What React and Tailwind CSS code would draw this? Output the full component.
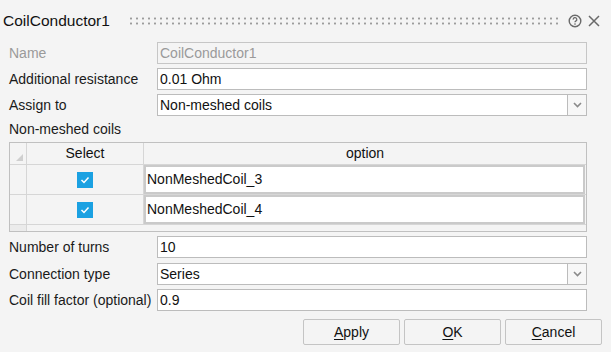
import React from "react";

const font = { fontFamily: "'Liberation Sans', Arial, sans-serif" };

const Field = ({ label, value, disabled, select, mt = "mt-[4px]" }) => (
  <div className={`flex items-center h-[22px] ${mt}`}>
    <div className={`w-[148px] whitespace-nowrap ${disabled ? "text-[#9a9a9a]" : "text-[#1a1a1a]"}`}>{label}</div>
    <div className="flex flex-1 h-full">
      <div
        className={`flex-1 flex items-center px-[2px] border ${
          disabled ? "border-[#c6c6c6] bg-[#f4f4f4] text-[#9a9a9a]" : "border-[#bcbcbc] bg-white text-[#111]"
        }`}
      >
        {value}
      </div>
      {select && (
        <div className="w-[19px] border border-l-0 border-[#bcbcbc] bg-[#f7f7f7] flex items-center justify-center">
          <svg width="9" height="6" viewBox="0 0 9 6">
            <path d="M1 1l3.5 3.5L8 1" fill="none" stroke="#8a8a8a" strokeWidth="1.6" />
          </svg>
        </div>
      )}
    </div>
  </div>
);

const Check = () => (
  <div className="w-[16px] h-[16px] bg-[#1ba1e2] flex items-center justify-center">
    <svg width="10" height="8" viewBox="0 0 10 8">
      <path d="M1.5 4l2.5 2.5L8.5 1.5" fill="none" stroke="white" strokeWidth="1.5" />
    </svg>
  </div>
);

const Row = ({ name }) => (
  <div className="flex h-[30px] border-b border-[#d6d6d6]">
    <div className="w-[17px] border-r border-[#d6d6d6]" />
    <div className="w-[117px] border-r border-[#d6d6d6] flex items-center justify-center">
      <Check />
    </div>
    <div className="flex-1 bg-white border-2 border-[#cacaca] flex items-center px-[1px] mr-[1px] text-[#111]">
      {name}
    </div>
  </div>
);

const Btn = ({ first, rest }) => (
  <button className="w-[97px] h-[26px] border border-[#c4c4c4] rounded-[2px] bg-[#f4f4f4] text-[#111]">
    <span className="underline underline-offset-2">{first}</span>
    {rest}
  </button>
);

export default function App() {
  return (
    <div className="w-[611px] h-[352px] bg-[#f4f4f4] text-[14px] overflow-hidden" style={font}>
      <div className="flex items-center h-[42px] pl-[3px] pb-[1px]">
        <div className="text-[15.5px] text-[#111]">CoilConductor1</div>
        <div className="ml-[18px] w-[432px] h-[9px] bg-[radial-gradient(circle,#9c9c9c_1px,transparent_1.2px)] bg-[length:6px_5px]" />
        <svg className="ml-[8px]" width="14" height="14" viewBox="0 0 14 14">
          <circle cx="7" cy="7" r="5.8" fill="none" stroke="#6a6a6a" strokeWidth="1.4" />
          <path d="M5.2 5.6a1.8 1.8 0 1 1 2.6 1.5c-.6.3-.8.6-.8 1.2" fill="none" stroke="#6a6a6a" strokeWidth="1.3" />
          <circle cx="7" cy="10.1" r="0.8" fill="#6a6a6a" />
        </svg>
        <svg className="ml-[6px]" width="12" height="12" viewBox="0 0 12 12">
          <path d="M1 1l10 10M11 1L1 11" stroke="#6a6a6a" strokeWidth="1.5" />
        </svg>
      </div>

      <div className="pl-[9px] pr-[24px]">
        <Field label="Name" value="CoilConductor1" disabled mt="mt-0" />
        <Field label="Additional resistance" value="0.01 Ohm" />
        <Field label="Assign to" value="Non-meshed coils" select />
        <div className="h-[26px] flex items-center text-[#1a1a1a]">Non-meshed coils</div>

        <div className="h-[90px] border border-[#c0c0c0] flex flex-col">
          <div className="flex h-[22px] border-b border-[#d6d6d6] text-[#111]">
            <div className="w-[17px] border-r border-[#d6d6d6] relative">
              <div className="absolute right-[3px] bottom-[3px] w-0 h-0 border-l-[7px] border-l-transparent border-b-[7px] border-b-[#cfcfcf]" />
            </div>
            <div className="w-[117px] border-r border-[#d6d6d6] flex items-center justify-center">Select</div>
            <div className="flex-1 flex items-center justify-center">option</div>
          </div>
          <Row name="NonMeshedCoil_3" />
          <Row name="NonMeshedCoil_4" />
          <div className="flex-1 flex">
            <div className="w-[17px] border-r border-[#d6d6d6] bg-[#ebebeb]" />
            <div className="flex-1" />
          </div>
        </div>

        <Field label="Number of turns" value="10" mt="mt-[4px]" />
        <Field label="Connection type" value="Series" select mt="mt-[5px]" />
        <Field label="Coil fill factor (optional)" value="0.9" mt="mt-[4px]" />
      </div>

      <div className="flex justify-end gap-[4px] pr-[9px] mt-[8px]">
        <Btn first="A" rest="pply" />
        <Btn first="O" rest="K" />
        <Btn first="C" rest="ancel" />
      </div>
    </div>
  );
}
